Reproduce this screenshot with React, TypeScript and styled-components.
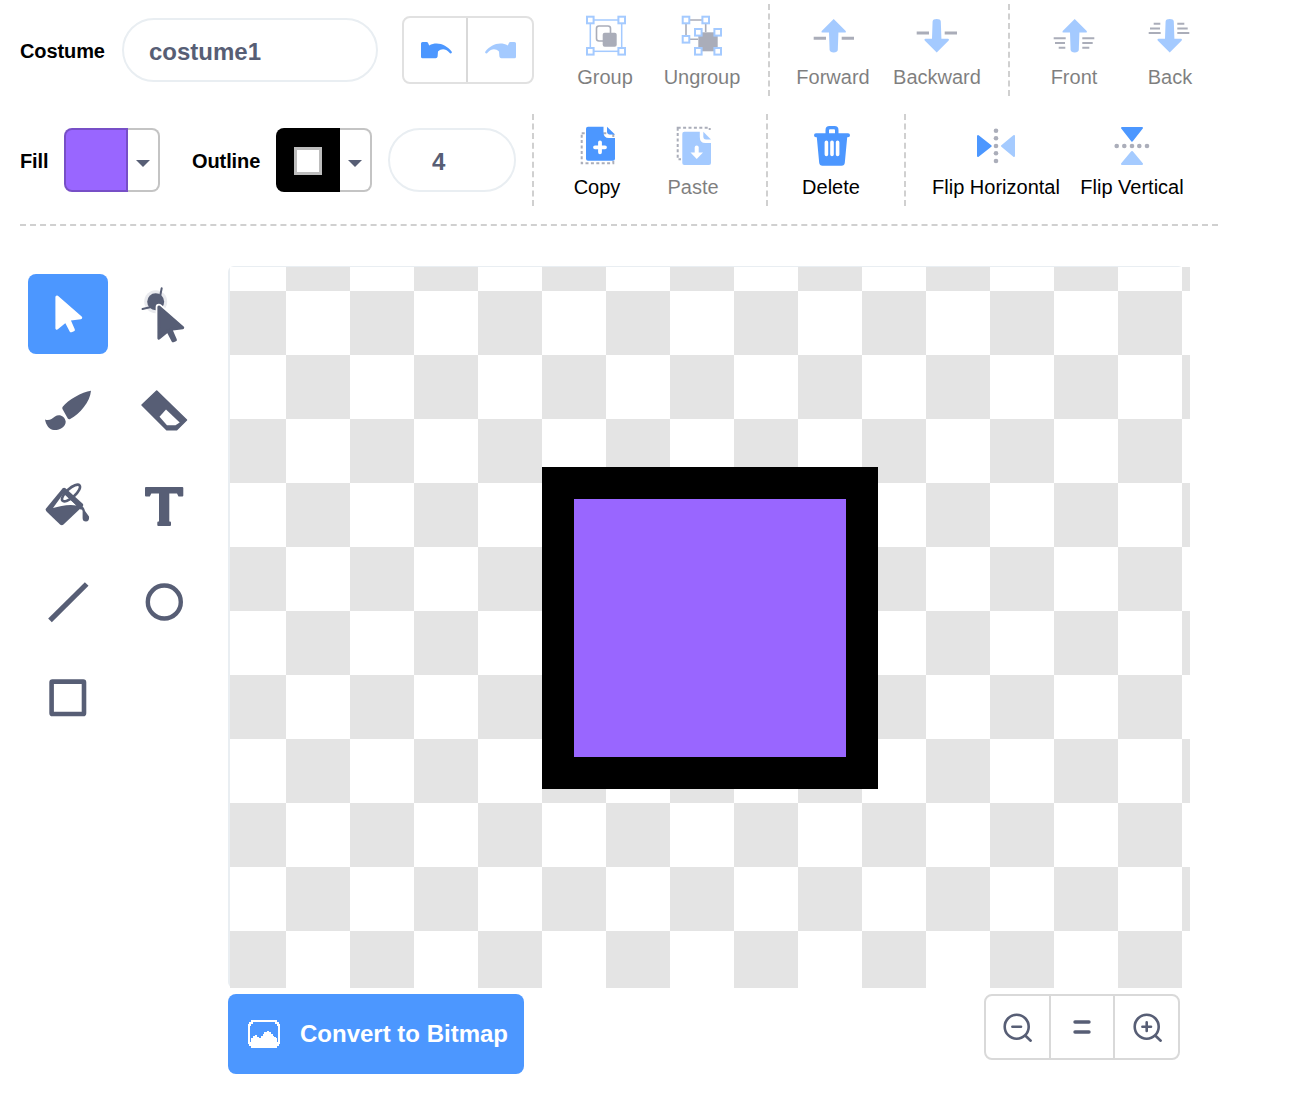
import * as React from 'react';
import styled, { createGlobalStyle } from 'styled-components';

const BLUE = '#4c97ff';
const LIGHT_BLUE = '#a5cbff';
const SLATE = '#575e75';
const DASH = '#d0d0d0';

const GlobalStyle = createGlobalStyle`
  html, body {
    margin: 0;
    background: #fff;
    font-family: "Liberation Sans", Arial, sans-serif;
  }
`;

const Page = styled.div`
  width: 1198px;
  padding: 4px 0 0 20px;
`;

const Row = styled.div`
  display: flex;
  align-items: center;
  height: 92px;
  margin-bottom: ${(props) => props.$mb}px;
`;

const FieldLabel = styled.span`
  width: ${(props) => props.$w}px;
  margin-left: ${(props) => props.$ml || 0}px;
  padding-top: 2px;
  font-size: 20px;
  font-weight: 700;
  letter-spacing: -0.1px;
  color: #000;
  flex: none;
`;

const Pill = styled.input`
  box-sizing: border-box;
  width: ${(props) => props.$w}px;
  height: 64px;
  margin-left: ${(props) => props.$ml}px;
  padding: 4px 0 0 ${(props) => props.$pad}px;
  border: 2px solid #e9eef2;
  border-radius: 32px;
  background: #fff;
  color: ${SLATE};
  font: 700 24px "Liberation Sans", Arial, sans-serif;
  outline: none;
  flex: none;
`;

const UndoGroup = styled.div`
  box-sizing: border-box;
  display: flex;
  width: 132px;
  height: 68px;
  margin-left: 24px;
  border: 2px solid #e1e1e1;
  border-radius: 8px;
  flex: none;
`;

const UndoCell = styled.button`
  flex: none;
  width: ${(props) => (props.disabled ? 66 : 62)}px;
  display: flex;
  align-items: center;
  justify-content: center;
  padding: 0 0 0 ${(props) => (props.disabled ? 0 : 3)}px;
  background: none;
  border: none;
  & + & {
    border-left: 2px solid #d9d9d9;
  }
  svg {
    opacity: ${(props) => (props.disabled ? 0.5 : 1)};
  }
`;

const Section = styled.div`
  display: flex;
  height: 92px;
  box-sizing: border-box;
  margin-left: ${(props) => props.$ml}px;
  padding-left: ${(props) => props.$pad}px;
  border-left: ${(props) => (props.$plain ? 'none' : `2px dashed ${DASH}`)};
`;

const ToolButton = styled.button`
  display: flex;
  flex-direction: column;
  align-items: center;
  width: ${(props) => props.$w}px;
  padding: 12px 0 0;
  background: none;
  border: none;
  color: #000;
  font: 400 20px/23px "Liberation Sans", Arial, sans-serif;
  white-space: nowrap;
  opacity: ${(props) => (props.disabled ? 0.5 : 1)};
  svg {
    display: block;
    overflow: visible;
    margin-bottom: 10px;
  }
`;

const Swatch = styled.div`
  display: flex;
  width: 96px;
  height: 64px;
  flex: none;
`;

const ColorCell = styled.div`
  box-sizing: border-box;
  display: flex;
  align-items: center;
  justify-content: center;
  width: 64px;
  background: ${(props) => props.$color};
  border: 2px solid rgba(0, 0, 0, 0.22);
  border-radius: 8px 0 0 8px;
`;

const NoFill = styled.div`
  box-sizing: border-box;
  width: 28px;
  height: 28px;
  margin-top: 2px;
  background: #fff;
  border: 3px solid #bdbdbd;
`;

const CaretCell = styled.div`
  flex: 1;
  display: flex;
  align-items: center;
  justify-content: center;
  border: 2px solid #c4c4c4;
  border-left: none;
  border-radius: 0 8px 8px 0;
`;

const Caret = styled.div`
  width: 0;
  height: 0;
  margin-top: 6px;
  border-left: 7px solid transparent;
  border-right: 7px solid transparent;
  border-top: 7px solid ${SLATE};
`;

const Rule = styled.div`
  border-top: 2px dashed ${DASH};
  margin-top: 18px;
`;

const Workspace = styled.div`
  display: flex;
`;

const ToolGrid = styled.div`
  display: grid;
  grid-template-columns: 80px 80px;
  grid-auto-rows: 80px;
  gap: 16px;
  align-content: start;
  margin: 48px 24px 0 8px;
`;

const ModeButton = styled.button`
  display: flex;
  align-items: center;
  justify-content: center;
  padding: 0;
  background: ${(props) => (props.$active ? BLUE : 'none')};
  border: none;
  border-radius: 8px;
  svg {
    overflow: visible;
  }
`;

const CanvasColumn = styled.div`
  display: flex;
  flex-direction: column;
  width: 962px;
  margin-top: 40px;
`;

const CanvasFrame = styled.div`
  box-sizing: border-box;
  width: 956px;
  height: 722px;
  border-left: 2px solid #e9eef2;
  border-top: 1px solid #e9eef2;
  border-radius: 6px;
`;

const Checker = styled.div`
  position: relative;
  width: 960px;
  height: 721px;
  background: conic-gradient(#fff 25%, #e4e4e4 0 50%, #fff 0 75%, #e4e4e4 0) 56px -40px / 128px 128px;
`;

const Shape = styled.div`
  position: absolute;
  left: 312px;
  top: 200px;
  box-sizing: border-box;
  width: 336px;
  height: 322px;
  background: #9966ff;
  border: 32px solid #000;
`;

const BottomBar = styled.div`
  display: flex;
  justify-content: space-between;
  align-items: flex-start;
  margin-top: 6px;
  padding-right: 10px;
`;

const ConvertButton = styled.button`
  display: flex;
  align-items: center;
  gap: 20px;
  box-sizing: border-box;
  width: 296px;
  height: 80px;
  padding: 0 0 0 20px;
  background: ${BLUE};
  border: none;
  border-radius: 8px;
  color: #fff;
  font: 700 24px "Liberation Sans", Arial, sans-serif;
  white-space: nowrap;
`;

const ZoomGroup = styled.div`
  box-sizing: border-box;
  display: flex;
  width: 196px;
  height: 66px;
  border: 2px solid #d9d9d9;
  border-radius: 8px;
`;

const ZoomCell = styled.button`
  flex: 1;
  display: flex;
  align-items: center;
  justify-content: center;
  padding: 0;
  background: none;
  border: none;
  & + & {
    border-left: 2px solid #d9d9d9;
  }
`;

const UndoIcon = ({ flip }: { flip?: boolean }) => (
  <svg width="32" height="17" viewBox="0 0 32 17" style={flip ? { transform: 'scaleX(-1)' } : undefined}>
    <path
      fill={BLUE}
      d="M1.5 0H5.5Q6.8 0 7.2 1.2L8.2 3.4C16 -1 25.5 2.5 30.6 9.6Q31.4 11.4 29.8 11.4Q29 11.4 28 10.2C25 7 20.5 6 17 9.6L16.6 14.6Q16.4 16.3 14.6 16.3H1.5Q0 16.3 0 14.8V1.5Q0 0 1.5 0Z"
    />
  </svg>
);

const Handle = ({ x, y }: { x: number; y: number }) => (
  <rect x={x - 3.3} y={y - 3.3} width="6.6" height="6.6" fill="#fff" stroke={BLUE} strokeWidth="2" />
);

const GroupIcon = () => (
  <svg width="40" height="40" viewBox="0 0 40 40">
    <rect x="5.3" y="4" width="31.4" height="31.3" fill="none" stroke={BLUE} strokeWidth="1.5" />
    <rect x="11.5" y="10" width="14" height="15" rx="2.5" fill="none" stroke={SLATE} strokeWidth="1.6" />
    <rect x="17.7" y="16.7" width="14" height="14" rx="2" fill={SLATE} />
    <Handle x={5.3} y={4} />
    <Handle x={36.7} y={4} />
    <Handle x={5.3} y={35.3} />
    <Handle x={36.7} y={35.3} />
  </svg>
);

const UngroupIcon = () => (
  <svg width="40" height="40" viewBox="0 0 40 40">
    <path d="M4 4H23.7M4 4V23.3H16" fill="none" stroke={SLATE} strokeWidth="1.6" />
    <path d="M23.7 4V16" fill="none" stroke={SLATE} strokeWidth="1.6" />
    <rect x="16.3" y="16.3" width="19.4" height="19" fill={SLATE} />
    <Handle x={4} y={4} />
    <Handle x={23.7} y={4} />
    <Handle x={4} y={23.3} />
    <Handle x={16.3} y={16.3} />
    <Handle x={35.7} y={16.3} />
    <Handle x={16.3} y={35.3} />
    <Handle x={35.7} y={35.3} />
  </svg>
);

const ARROW = 'M20.7 3L32.7 15Q33.6 16.6 32 16.6H25.4L24.8 34Q24.4 36.4 20.7 36.4Q17 36.4 16.6 34L16 16.6H9.4Q7.8 16.6 8.7 15Z';

const LayerIcon = ({ down, far }: { down?: boolean; far?: boolean }) => (
  <svg width="40" height="40" viewBox="0 0 40 40">
    <g transform={down ? 'translate(-1 39.4) scale(1 -1)' : undefined}>
      {far ? (
        <g fill="none" stroke={SLATE} strokeWidth="2">
          <path d="M-0.3 22.3H11.7M28.3 22.3H40.3" />
          <path d="M1 27H11M28.3 27H38.7" />
          <path d="M4.7 31.7H11.3M28.3 31.7H35.3" />
        </g>
      ) : (
        <path d="M0.7 22.3H13M28.7 22.3H41" fill="none" stroke={SLATE} strokeWidth="3" />
      )}
      <path fill={BLUE} d={ARROW} />
    </g>
  </svg>
);

const CopyIcon = () => (
  <svg width="40" height="40" viewBox="0 0 40 40">
    <rect x="4.7" y="7.3" width="31.6" height="30" fill="none" stroke="#abaeba" strokeWidth="2" strokeDasharray="3 2.4" />
    <path fill={BLUE} d="M11 .7H26.5V6Q26.5 12 32 12H38V32.7Q38 34.7 36 34.7H11Q9 34.7 9 32.7V2.7Q9 .7 11 .7Z" />
    <path fill={BLUE} d="M30 .7L38 8.5H33Q30 8.5 30 5.5Z" />
    <path d="M18 21.3H28M23 16.3V26.3" fill="none" stroke="#fff" strokeWidth="3.8" strokeLinecap="round" />
  </svg>
);

const PasteIcon = () => (
  <svg width="40" height="40" viewBox="0 0 40 40">
    <rect x="4.7" y="1.7" width="32" height="31.6" fill="none" stroke={SLATE} strokeWidth="2" strokeDasharray="3 2.4" />
    <rect x="8" y="4" width="31" height="36" fill="#fff" />
    <path fill={BLUE} d="M11.3 5.7H26.8V11Q26.8 17 32.3 17H38V37Q38 39 36 39H11.3Q9.3 39 9.3 37V7.7Q9.3 5.7 11.3 5.7Z" />
    <path fill={BLUE} d="M30.3 5.7L38 13.5H33.3Q30.3 13.5 30.3 10.5Z" />
    <path d="M23.7 21.5V29" fill="none" stroke="#fff" strokeWidth="4" strokeLinecap="round" />
    <path d="M17.5 26.5H30L23.7 33Z" fill="#fff" />
  </svg>
);

const TrashIcon = () => (
  <svg width="40" height="40" viewBox="0 0 40 40">
    <path
      fill={BLUE}
      d="M14.5 7.3V4.2Q14.5 0 18.5 0H23.5Q27.5 0 27.5 4.2V7.3H37Q39 7.3 39 9.3Q39 11.3 37 11.3H36.2L33.8 36.7Q33.5 39.7 30.5 39.7H11.5Q8.5 39.7 8.2 36.7L5.8 11.3H5Q3 11.3 3 9.3Q3 7.3 5 7.3ZM18 7.3H24V4.2Q24 3.2 23 3.2H19Q18 3.2 18 4.2Z"
      fillRule="evenodd"
    />
    <path d="M15.4 16.2V28.5M21 16.2V28.5M26.6 16.2V28.5" fill="none" stroke="#fff" strokeWidth="3.6" strokeLinecap="round" />
  </svg>
);

const FLIP_DOTS = [4.7, 12.3, 20, 27.3, 35];

const FlipIcon = ({ vertical }: { vertical?: boolean }) => (
  <svg width="40" height="40" viewBox="0 0 40 40">
    <g transform={vertical ? 'rotate(90 20 20) scale(1 -1) translate(0 -40)' : undefined}>
      {FLIP_DOTS.map((y) => (
        <circle key={y} cx="20" cy={y} r="2.3" fill="#abaeba" />
      ))}
      <path d="M2 10V30L14.7 20Z" fill={BLUE} stroke={BLUE} strokeWidth="2" strokeLinejoin="round" />
      <path d="M38 10V30L26 20Z" fill={LIGHT_BLUE} stroke={LIGHT_BLUE} strokeWidth="2" strokeLinejoin="round" />
    </g>
  </svg>
);

const CURSOR = 'M12.9 7L36.7 27.7L24.7 29.2L29.4 39.8L27 40.8L21.8 30.8L12.9 38.2Z';

const SelectIcon = () => (
  <svg width="48" height="48" viewBox="0 0 48 48">
    <path d={CURSOR} fill="#fff" stroke="#fff" strokeWidth="3" strokeLinejoin="round" />
  </svg>
);

const ReshapeIcon = () => (
  <svg width="48" height="48" viewBox="0 0 48 48">
    <circle cx="15.7" cy="11.7" r="11.5" fill="#e9eaee" />
    <path d="M21.7 -1.7L20 6.7M2.5 19L10 17.3" fill="none" stroke={SLATE} strokeWidth="2" strokeLinecap="round" />
    <circle cx="15.7" cy="11.7" r="8.5" fill={SLATE} />
    <g transform="translate(6 10)" strokeLinejoin="round">
      <path d={CURSOR} fill="#fff" stroke="#fff" strokeWidth="6.5" />
      <path d={CURSOR} fill={SLATE} stroke={SLATE} strokeWidth="3" />
    </g>
  </svg>
);

const BrushIcon = () => (
  <svg width="48" height="48" viewBox="0 0 48 48" fill={SLATE}>
    <path d="M47 4.7C38 6 24 14 18.7 20.7Q17.8 22 18.6 23.2L23.8 32.6Q24.8 33.8 26.2 33C36 27.5 46 16 47 4.7Z" />
    <path d="M1 33.5C5 35 8 33 11 30.5C15 27.5 21 30 21.7 35.5C22 41 15 44.5 10 44C5 43.5 2 39 1 33.5Z" />
  </svg>
);

const EraserIcon = () => (
  <svg width="48" height="48" viewBox="0 0 48 48">
    <path
      fill={SLATE}
      stroke={SLATE}
      strokeWidth="1.5"
      strokeLinejoin="round"
      d="M2 19L16.7 5L46.5 34L36.7 43.7H26.7Z"
    />
    <path d="M26 23.5L19.5 30.7L27 39.2H35.5L39.7 36.6Z" fill="#fff" />
  </svg>
);

const FillIcon = () => (
  <svg width="48" height="48" viewBox="0 0 48 48">
    <path
      d="M2 26.5L18.5 6.5Q20 5 21.5 6.3L38.5 21.5Q40 23 38.5 24.5L19.5 42.5Q18 43.8 16.3 42.8L3 30Q1 28 2 26.5Z"
      fill={SLATE}
    />
    <path d="M9 26L19.5 11.5L32.5 23.5C25 22 16 24 9 26Z" fill="#fff" />
    <ellipse cx="27" cy="11" rx="11.5" ry="4.4" transform="rotate(-42 27 11)" fill="none" stroke={SLATE} strokeWidth="2.6" />
    <path d="M22 11.5L38 27" fill="none" stroke={SLATE} strokeWidth="2.5" />
    <path d="M36 23Q40 24 41 29L45 34.5Q45.6 39.5 42 39.5Q38.6 39.5 38.6 36V29Z" fill={SLATE} />
  </svg>
);

const TextIcon = () => (
  <svg width="48" height="48" viewBox="0 0 48 48">
    <path
      fill={SLATE}
      d="M5 6Q5 5 6 5H42.3Q43.3 5 43.3 6V13.5Q43.3 14.5 42.3 14.5H38.5L37 11.5H29.3V39.5H30Q31 39.5 31 40.7V43Q31 44 30 44H18.3Q17.3 44 17.3 43V40.7Q17.3 39.5 18.3 39.5H19V11.5H11.3L9.8 14.5H6Q5 14.5 5 13.5Z"
    />
  </svg>
);

const LineIcon = () => (
  <svg width="48" height="48" viewBox="0 0 48 48">
    <path d="M6 42.3L42.7 6" stroke={SLATE} strokeWidth="5.2" fill="none" />
  </svg>
);

const OvalIcon = () => (
  <svg width="48" height="48" viewBox="0 0 48 48">
    <circle cx="24.3" cy="24" r="16.5" fill="none" stroke={SLATE} strokeWidth="4.4" />
  </svg>
);

const RectIcon = () => (
  <svg width="48" height="48" viewBox="0 0 48 48">
    <rect x="7.6" y="7.6" width="32.4" height="32.4" rx="0.8" fill="none" stroke={SLATE} strokeWidth="4.6" />
  </svg>
);

const BitmapIcon = () => (
  <svg width="32" height="28" viewBox="0 0 32 28" shapeRendering="crispEdges">
    <path d="M4 1H28V3H30V5H31V23H30V25H28V27H4V25H2V23H1V5H2V3H4Z" fill="none" stroke="#fff" strokeWidth="2" />
    <path fill="#fff" d="M3 24V18H5V16H7V15H9V17H11V18H13V16H15V14H16V12H19V11H21V12H23V14H25V16H26V17H28V18H29V24H27V26H5V24Z" />
  </svg>
);

const ZoomIcon = ({ plus }: { plus?: boolean }) => (
  <svg width="32" height="32" viewBox="0 0 32 32">
    <circle cx="15.7" cy="15.7" r="12" fill="none" stroke={SLATE} strokeWidth="2.6" />
    <path d="M24.5 24.7L29.7 29.7" stroke={SLATE} strokeWidth="2.6" strokeLinecap="round" />
    <path d={plus ? 'M11.4 15.7H20M15.7 11.4V20' : 'M11.4 15.7H20'} stroke={SLATE} strokeWidth="2.6" strokeLinecap="round" />
  </svg>
);

const EqualIcon = () => (
  <svg width="18" height="14" viewBox="0 0 18 14">
    <path d="M2 2H16M2 12H16" stroke={SLATE} strokeWidth="3.4" strokeLinecap="round" />
  </svg>
);

const modes = [
  { key: 'select', icon: <SelectIcon />, active: true },
  { key: 'reshape', icon: <ReshapeIcon /> },
  { key: 'brush', icon: <BrushIcon /> },
  { key: 'eraser', icon: <EraserIcon /> },
  { key: 'fill', icon: <FillIcon /> },
  { key: 'text', icon: <TextIcon /> },
  { key: 'line', icon: <LineIcon /> },
  { key: 'oval', icon: <OvalIcon /> },
  { key: 'rect', icon: <RectIcon /> },
];

export default function App() {
  return (
    <Page>
      <GlobalStyle />
      <Row $mb={18}>
        <FieldLabel $w={102}>Costume</FieldLabel>
        <Pill $w={256} $ml={0} $pad={25} value="costume1" readOnly />
        <UndoGroup>
          <UndoCell><UndoIcon /></UndoCell>
          <UndoCell disabled><UndoIcon flip /></UndoCell>
        </UndoGroup>
        <Section $plain $ml={23} $pad={0}>
          <ToolButton $w={96} disabled><GroupIcon />Group</ToolButton>
          <ToolButton $w={98} disabled><UngroupIcon />Ungroup</ToolButton>
        </Section>
        <Section $ml={17} $pad={11}>
          <ToolButton $w={104} disabled><LayerIcon />Forward</ToolButton>
          <ToolButton $w={104} disabled><LayerIcon down />Backward</ToolButton>
        </Section>
        <Section $ml={19} $pad={16}>
          <ToolButton $w={96} disabled><LayerIcon far />Front</ToolButton>
          <ToolButton $w={96} disabled><LayerIcon far down />Back</ToolButton>
        </Section>
      </Row>
      <Row>
        <FieldLabel $w={44}>Fill</FieldLabel>
        <Swatch>
          <ColorCell $color="#9966ff" />
          <CaretCell><Caret /></CaretCell>
        </Swatch>
        <FieldLabel $w={84} $ml={32}>Outline</FieldLabel>
        <Swatch>
          <ColorCell $color="#000"><NoFill /></ColorCell>
          <CaretCell><Caret /></CaretCell>
        </Swatch>
        <Pill $w={128} $ml={16} $pad={42} value="4" readOnly />
        <Section $ml={16} $pad={15}>
          <ToolButton $w={96}><CopyIcon />Copy</ToolButton>
          <ToolButton $w={96} disabled><PasteIcon />Paste</ToolButton>
        </Section>
        <Section $ml={25} $pad={15}>
          <ToolButton $w={96}><TrashIcon />Delete</ToolButton>
        </Section>
        <Section $ml={25} $pad={22}>
          <ToolButton $w={136}><FlipIcon />Flip Horizontal</ToolButton>
          <ToolButton $w={136}><FlipIcon vertical />Flip Vertical</ToolButton>
        </Section>
      </Row>
      <Rule />
      <Workspace>
        <ToolGrid>
          {modes.map((mode) => (
            <ModeButton key={mode.key} $active={mode.active}>{mode.icon}</ModeButton>
          ))}
        </ToolGrid>
        <CanvasColumn>
          <CanvasFrame>
            <Checker>
              <Shape />
            </Checker>
          </CanvasFrame>
          <BottomBar>
            <ConvertButton><BitmapIcon />Convert to Bitmap</ConvertButton>
            <ZoomGroup>
              <ZoomCell><ZoomIcon /></ZoomCell>
              <ZoomCell><EqualIcon /></ZoomCell>
              <ZoomCell><ZoomIcon plus /></ZoomCell>
            </ZoomGroup>
          </BottomBar>
        </CanvasColumn>
      </Workspace>
    </Page>
  );
}
